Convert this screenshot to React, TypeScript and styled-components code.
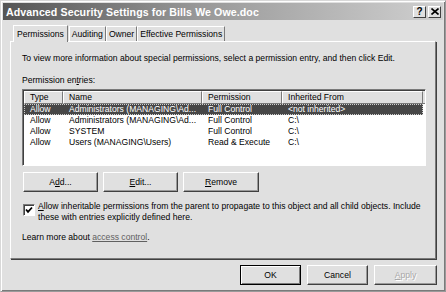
import React from 'react';
import styled, { createGlobalStyle } from 'styled-components';

const GlobalStyle = createGlobalStyle`
  html, body {
    margin: 0;
    padding: 0;
    background: #e0e0e0;
  }
  * {
    box-sizing: border-box;
  }
`;

const Window = styled.div`
  width: 446px;
  height: 292px;
  background: #e0e0e0;
  border: 1px solid #9a9a9a;
  border-top-color: #d8d8d8;
  border-left-color: #d8d8d8;
  box-shadow: inset 1px 1px 0 #ffffff, inset -1px -1px 0 #7a7a7a;
  padding: 2px;
  font-family: 'Liberation Sans', Arial, sans-serif;
  font-size: 8.6px;
  color: #000;
  display: flex;
  flex-direction: column;
`;

const TitleBar = styled.div`
  height: 17px;
  display: flex;
  align-items: center;
  justify-content: space-between;
  padding: 0 2px 0 3px;
  background: linear-gradient(to right, #555555 0%, #999999 45%, #d0d0d0 100%);
`;

const TitleText = styled.span`
  color: #ffffff;
  font-weight: bold;
  font-size: 10.6px;
  letter-spacing: 0.1px;
`;

const CaptionButtons = styled.div`
  display: flex;
  gap: 2px;
`;

const CaptionButton = styled.div`
  width: 13px;
  height: 12px;
  background: #e0e0e0;
  border: 1px solid;
  border-color: #ffffff #404040 #404040 #ffffff;
  display: flex;
  align-items: center;
  justify-content: center;
  font-weight: bold;
  font-size: 10px;
  line-height: 1;
`;

const TabStrip = styled.div`
  display: flex;
  align-items: flex-end;
  height: 20px;
  padding-left: 9px;
  margin-top: 1px;
`;

const Tab = styled.div<{ $active?: boolean }>`
  height: ${(p) => (p.$active ? '17px' : '15px')};
  padding: 0 ${(p) => (p.$active ? '3px' : '2px')};
  margin: 0 ${(p) => (p.$active ? '1px' : '0')};
  background: #e0e0e0;
  border: 1px solid;
  border-color: #ffffff #7a7a7a transparent #ffffff;
  border-bottom: none;
  display: flex;
  align-items: center;
  position: relative;
  z-index: ${(p) => (p.$active ? 2 : 1)};
  margin-bottom: ${(p) => (p.$active ? '-1px' : '0')};
`;

const Panel = styled.div`
  margin: 0 7px 0 7px;
  height: 218px;
  border: 1px solid;
  border-color: #ffffff #7a7a7a #7a7a7a #ffffff;
  box-shadow: 1px 1px 0 #404040;
  padding: 10px 9px 0 11px;
  display: flex;
  flex-direction: column;
`;

const Line = styled.div`
  line-height: 13px;
  white-space: nowrap;
`;

const Label = styled(Line)`
  margin-top: 9px;
`;

const ListBox = styled.div`
  margin-top: 2px;
  height: 77px;
  background: #ffffff;
  border: 1px solid;
  border-color: #7a7a7a #ffffff #ffffff #7a7a7a;
  box-shadow: inset 1px 1px 0 #404040;
  padding: 1px 0 0 1px;
`;

const cols = [39, 139, 80, 141];

const HeaderRow = styled.div`
  display: flex;
  height: 13px;
`;

const HeaderCell = styled.div<{ $w: number }>`
  width: ${(p) => p.$w}px;
  flex: none;
  background: #e0e0e0;
  border: 1px solid;
  border-color: #ffffff #7a7a7a #7a7a7a #ffffff;
  padding-left: 5px;
  line-height: 11px;
  white-space: nowrap;
`;

const HeaderFill = styled.div`
  flex: 1;
  background: #e0e0e0;
  border-bottom: 1px solid #7a7a7a;
`;

const Row = styled.div<{ $selected?: boolean }>`
  display: flex;
  height: 11px;
  margin-right: 2px;
  background: ${(p) => (p.$selected ? '#474747' : 'transparent')};
  color: ${(p) => (p.$selected ? '#ffffff' : '#000000')};
  outline: ${(p) => (p.$selected ? '1px dotted #cfcfcf' : 'none')};
  outline-offset: -1px;
`;

const Cell = styled.div<{ $w: number }>`
  width: ${(p) => p.$w}px;
  flex: none;
  padding-left: 6px;
  line-height: 11px;
  white-space: nowrap;
  overflow: hidden;
`;

const ButtonRow = styled.div`
  display: flex;
  gap: 5px;
  margin-top: 6px;
  padding-left: 1px;
`;

const Button = styled.div<{ $w?: number; $default?: boolean; $disabled?: boolean }>`
  width: ${(p) => p.$w ?? 75}px;
  height: 20px;
  background: #e0e0e0;
  border: 1px solid;
  border-color: ${(p) =>
    p.$default ? '#000000' : '#ffffff #404040 #404040 #ffffff'};
  box-shadow: ${(p) =>
    p.$default
      ? 'inset 1px 1px 0 #ffffff, inset -1px -1px 0 #7a7a7a'
      : 'inset -1px -1px 0 #9a9a9a'};
  display: flex;
  align-items: center;
  justify-content: center;
  color: ${(p) => (p.$disabled ? '#a8a8a8' : '#000')};
  text-shadow: ${(p) => (p.$disabled ? '1px 1px 0 #ffffff' : 'none')};
  flex: none;
`;

const U = styled.span`
  text-decoration: underline;
`;

const CheckRow = styled.div`
  display: flex;
  margin-top: 9px;
  gap: 3px;
  padding-left: 1px;
`;

const CheckBox = styled.div`
  width: 12px;
  height: 12px;
  margin-top: 3px;
  flex: none;
  background: #ffffff;
  border: 1px solid;
  border-color: #7a7a7a #ffffff #ffffff #7a7a7a;
  box-shadow: inset 1px 1px 0 #404040;
  display: flex;
  align-items: center;
  justify-content: center;
`;

const CheckText = styled.div`
  line-height: 11px;
  white-space: nowrap;
`;

const LearnMore = styled(Line)`
  margin-top: 8px;
`;

const Link = styled.span`
  color: #606060;
  text-decoration: underline;
`;

const Footer = styled.div`
  display: flex;
  justify-content: flex-end;
  gap: 6px;
  padding: 6px 6px 0 0;
`;

const rows = [
  ['Allow', 'Administrators (MANAGING\\Ad...', 'Full Control', '<not inherited>'],
  ['Allow', 'Administrators (MANAGING\\Ad...', 'Full Control', 'C:\\'],
  ['Allow', 'SYSTEM', 'Full Control', 'C:\\'],
  ['Allow', 'Users (MANAGING\\Users)', 'Read & Execute', 'C:\\'],
];

const headers = ['Type', 'Name', 'Permission', 'Inherited From'];

const App = () => (
  <>
    <GlobalStyle />
    <Window>
      <TitleBar>
        <TitleText>Advanced Security Settings for Bills We Owe.doc</TitleText>
        <CaptionButtons>
          <CaptionButton>?</CaptionButton>
          <CaptionButton>
            <svg width="8" height="7" viewBox="0 0 8 7">
              <path d="M0.5 0.5 L7.5 6.5 M7.5 0.5 L0.5 6.5" stroke="#000" strokeWidth="1.6" />
            </svg>
          </CaptionButton>
        </CaptionButtons>
      </TitleBar>
      <TabStrip>
        <Tab $active>Permissions</Tab>
        <Tab>Auditing</Tab>
        <Tab>Owner</Tab>
        <Tab>Effective Permissions</Tab>
      </TabStrip>
      <Panel>
        <Line>
          To view more information about special permissions, select a permission entry, and then click Edit.
        </Line>
        <Label>
          Permission en<U>t</U>ries:
        </Label>
        <ListBox>
          <HeaderRow>
            {headers.map((h, i) => (
              <HeaderCell key={h} $w={cols[i]}>
                {h}
              </HeaderCell>
            ))}
            <HeaderFill />
          </HeaderRow>
          {rows.map((r, ri) => (
            <Row key={ri} $selected={ri === 0}>
              {r.map((c, ci) => (
                <Cell key={ci} $w={cols[ci]}>
                  {c}
                </Cell>
              ))}
            </Row>
          ))}
        </ListBox>
        <ButtonRow>
          <Button>
            A<U>d</U>d...
          </Button>
          <Button>
            <U>E</U>dit...
          </Button>
          <Button $w={76}>
            <U>R</U>emove
          </Button>
        </ButtonRow>
        <CheckRow>
          <CheckBox>
            <svg width="8" height="8" viewBox="0 0 8 8">
              <path d="M1 3.5 L3 5.8 L7 1.5" stroke="#000" strokeWidth="1.8" fill="none" />
            </svg>
          </CheckBox>
          <CheckText>
            <U>A</U>llow inheritable permissions from the parent to propagate to this object and all child objects. Include
            <br />
            these with entries explicitly defined here.
          </CheckText>
        </CheckRow>
        <LearnMore>
          Learn more about <Link>access control</Link>.
        </LearnMore>
      </Panel>
      <Footer>
        <Button $w={61} $default>
          OK
        </Button>
        <Button $w={61}>Cancel</Button>
        <Button $w={63} $disabled>
          <U>A</U>pply
        </Button>
      </Footer>
    </Window>
  </>
);

export default App;
